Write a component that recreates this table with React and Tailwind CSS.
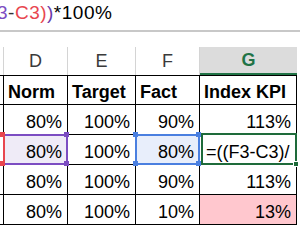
import React from "react";

const rows = [
  ["80%", "100%", "90%", "113%"],
  null,
  ["80%", "100%", "90%", "113%"],
  ["80%", "100%", "10%", "13%"],
];

function Cell({ children, className = "", right = true }) {
  return (
    <div
      className={`h-[30px] border-b border-r border-black flex items-end pb-[2px] leading-[20px] text-[18px] text-black ${
        right ? "justify-end pr-[5px]" : "justify-start pl-[4px]"
      } ${className}`}
    >
      {children}
    </div>
  );
}

function Handle({ className }) {
  return <div className={`absolute w-[5px] h-[5px] z-20 ${className}`} />;
}

export default function App() {
  return (
    <div className="w-[300px] h-[250px] bg-white overflow-hidden font-['Liberation_Sans',Arial,sans-serif]">
      {/* formula bar */}
      <div className="h-[32px] border-b-2 border-[#c8c8c8] pt-[3px] text-[19px] leading-[20px] tracking-[0.5px] whitespace-nowrap -ml-[3px]">
        <span className="text-[#7c4dc2]">3</span>
        <span className="text-[#333]">-</span>
        <span className="text-[#e8464f]">C3</span>
        <span className="text-[#e8464f]">)</span>
        <span className="text-[#6a3aa8]">)</span>
        <span className="text-black">*100%</span>
      </div>

      <div className="h-[15px]" />

      {/* column headers */}
      <div className="grid grid-cols-[4px_64px_68px_64px_97px_3px] h-[28px] text-[18px] leading-[28px] text-[#3a3a3a]">
        <div className="border-r border-[#d4d4d4]" />
        <div className="border-r border-[#d4d4d4] text-center">D</div>
        <div className="border-r border-[#d4d4d4] text-center">E</div>
        <div className="border-r border-[#d4d4d4] text-center">F</div>
        <div className="bg-[#dcdcdc] border-b-2 border-[#217346] text-center text-[#217346] font-bold leading-[26px]">
          G
        </div>
        <div />
      </div>

      {/* sheet */}
      <div className="grid grid-cols-[4px_64px_68px_64px_97px_3px]">
        <div className="h-[30px] border-t border-b border-r border-black" />
        <Cell right={false} className="border-t font-bold">Norm</Cell>
        <Cell right={false} className="border-t font-bold">Target</Cell>
        <Cell right={false} className="border-t font-bold">Fact</Cell>
        <Cell right={false} className="border-t font-bold">Index KPI</Cell>
        <div />

        {rows.map((r, i) =>
          r ? (
            <React.Fragment key={i}>
              <div className="h-[30px] border-b border-r border-black" />
              <Cell>{r[0]}</Cell>
              <Cell>{r[1]}</Cell>
              <Cell>{r[2]}</Cell>
              <Cell className={i === 3 ? "bg-[#ffc7ce] text-[#9c0006]" : ""}>
                {r[3]}
              </Cell>
              <div />
            </React.Fragment>
          ) : (
            <React.Fragment key={i}>
              <div className="h-[30px] border-b border-r border-black" />
              <Cell className="relative bg-[#efebf7]">
                80%
                <div className="absolute -top-[1px] -bottom-[1px] -left-[1px] -right-[1px] border-2 border-[#7c4dc2] border-l-[#e8464f] z-10" />
                <Handle className="-left-[4px] -top-[3px] bg-[#e8464f]" />
                <Handle className="-left-[4px] -bottom-[2px] bg-[#e8464f]" />
                <Handle className="-right-[2px] -top-[3px] bg-[#7c4dc2]" />
                <Handle className="-right-[2px] -bottom-[2px] bg-[#7c4dc2]" />
              </Cell>
              <Cell>100%</Cell>
              <Cell className="relative bg-[#e8eefb]">
                80%
                <div className="absolute -top-[1px] -bottom-[1px] -left-[1px] -right-[1px] border-2 border-[#4a7fe0] z-10" />
                <Handle className="-left-[3px] -top-[3px] bg-[#4a7fe0]" />
                <Handle className="-left-[3px] -bottom-[2px] bg-[#4a7fe0]" />
                <Handle className="-right-[2px] -top-[3px] bg-[#4a7fe0]" />
                <Handle className="-right-[2px] -bottom-[2px] bg-[#4a7fe0]" />
              </Cell>
              <Cell right={false} className="relative overflow-visible pl-[6px]">
                <span className="whitespace-nowrap overflow-hidden block w-[88px]">=((F3-C3)/</span>
                <div className="absolute -top-[2px] -bottom-[1px] left-[1px] -right-[1px] border-2 border-[#1e6b3a] z-10" />
                <div className="absolute -right-[3px] -bottom-[3px] w-[6px] h-[6px] bg-[#1e6b3a] border border-white z-20" />
              </Cell>
              <div />
            </React.Fragment>
          )
        )}
      </div>
    </div>
  );
}
